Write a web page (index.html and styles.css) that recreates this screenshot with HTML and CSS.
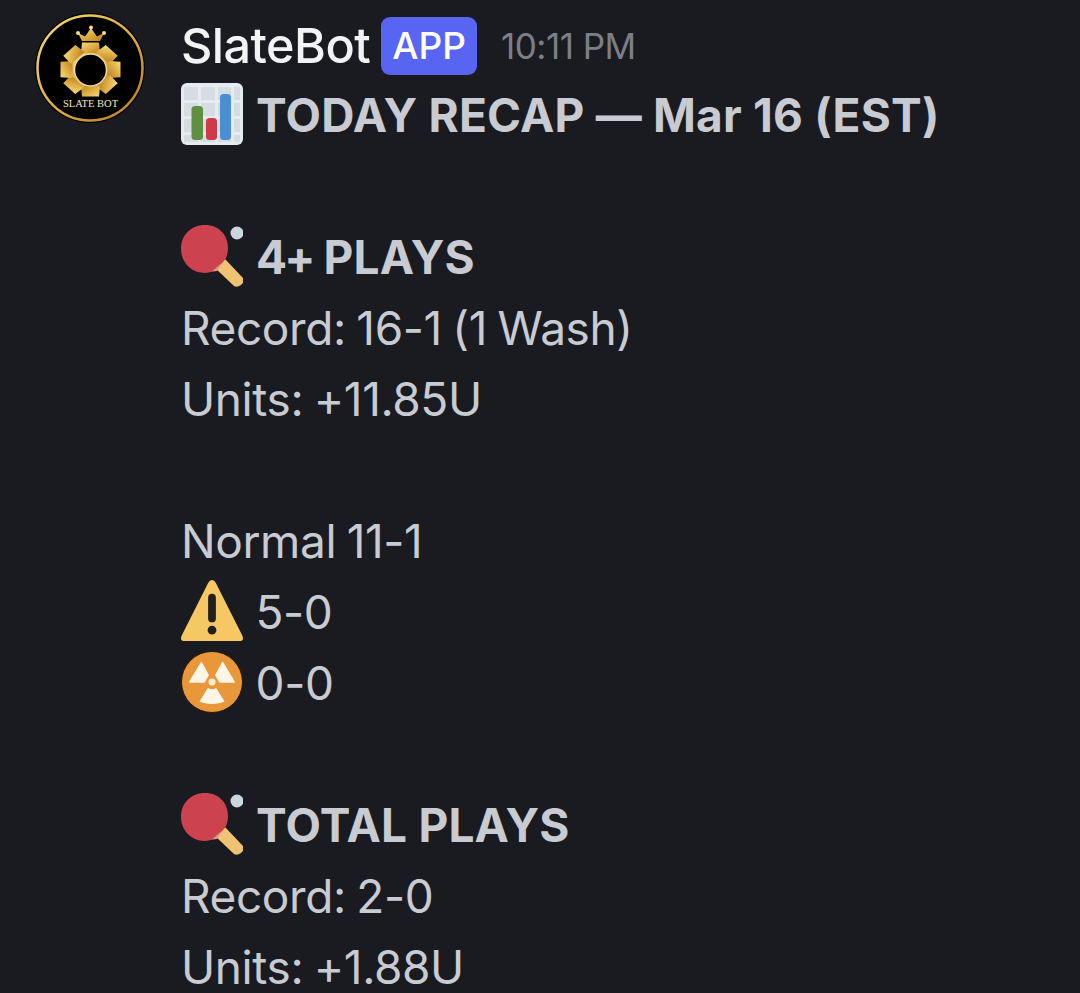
FILE: index.html
```html
<!DOCTYPE html>
<html lang="en">
<head>
<meta charset="utf-8">
<title>SlateBot</title>
<link rel="stylesheet" href="styles.css">
</head>
<body>
<svg class="defs" width="0" height="0" aria-hidden="true">
  <defs>
    <symbol id="paddle" viewBox="0 0 62 62">
      <path d="M43 33 L62 53 Q64 56 60 60 Q56 63 53 61 L33 42 Z" fill="#f0c274"/>
      <path d="M27 47 L36 46 L42 37 L39 33 L30 40 Z" fill="#d99e82"/>
      <path d="M24 0 C38 0 47 10 47 23 C47 29 45 35 41 38 L36 42 C33 45 30 48 24 48 C9 48 0 36 0 24 C0 10 10 0 24 0 Z" fill="#cd424f"/>
      <circle cx="56" cy="8" r="6.5" fill="#ccd6dd"/>
    </symbol>
    <symbol id="chart" viewBox="0 0 62 62">
      <rect width="62" height="62" rx="6" fill="#e6ebef"/>
      <path d="M3 4H17V17H3ZM20 4H34V17H20ZM37 4H50V17H37ZM53 4H59V17H53ZM3 20H17V33H3ZM20 20H34V33H20ZM37 20H50V33H37ZM53 20H59V33H53ZM3 36H17V49H3ZM20 36H34V49H20ZM37 36H50V49H37ZM53 36H59V49H53ZM3 52H17V59H3ZM20 52H34V59H20ZM37 52H50V59H37ZM53 52H59V59H53Z" fill="#d5dce2"/>
      <rect x="10.5" y="23" width="11.5" height="34" rx="3.5" fill="#5f8f43"/>
      <rect x="25" y="35" width="11" height="22" rx="3.5" fill="#cf3a49"/>
      <rect x="39" y="11" width="11" height="46" rx="3.5" fill="#4a8fd4"/>
    </symbol>
    <symbol id="warn" viewBox="0 0 64 63" preserveAspectRatio="none">
      <path d="M32 0 Q34.500 0 36 3 L63 56 Q66 62 60 62 H4 Q-2 62 1 56 L28 3 Q29.500 0 32 0 Z" fill="#f5c863"/>
      <rect x="28" y="14" width="8" height="29" rx="4" fill="#231f20"/>
      <circle cx="32" cy="51" r="4.500" fill="#231f20"/>
    </symbol>
    <symbol id="radio" viewBox="0 0 64 64">
      <circle cx="32" cy="32" r="31.500" fill="#e8973a" stroke="#2a1605" stroke-width="1"/>
      <circle cx="32" cy="32" r="3.700" fill="#fdebc8"/>
      <path class="blade" d="M21 12 L9 32 H24 L28 25 Z"/>
      <path class="blade" d="M43 12 L55 32 H40 L36 25 Z"/>
      <path class="blade" d="M20 52 Q32 56 44 52 L36 39 Q32 41 28 39 Z"/>
    </symbol>
    <linearGradient id="gold" x1="0" y1="0" x2="1" y2="1">
      <stop offset="0" stop-color="#f8dd7e"/>
      <stop offset="0.55" stop-color="#dca93f"/>
      <stop offset="1" stop-color="#b57e22"/>
    </linearGradient>
  </defs>
</svg>
<main class="message">
  <svg class="avatar" viewBox="0 0 110 110" role="img" aria-label="SlateBot">
    <circle cx="55" cy="55" r="55" fill="#000"/>
    <circle cx="55" cy="55" r="52.500" fill="none" stroke="url(#gold)" stroke-width="2.500"/>
    <path d="M47 28 L43 20 L50 23.500 L56 15 L62 23.500 L69 20 L65 28 Z" fill="url(#gold)"/>
    <circle cx="43" cy="20" r="2" fill="#f8dd7e"/>
    <circle cx="56" cy="14.500" r="2" fill="#f8dd7e"/>
    <circle cx="69" cy="20" r="2" fill="#f8dd7e"/>
    <g fill="url(#gold)" transform="translate(55.500 56.500) scale(1 0.9)">
      <circle r="24"/>
      <path id="tooth" d="M-8.500 -30 H8.500 L9.500 -18 H-9.500 Z"/>
      <use href="#tooth" transform="rotate(45)"/>
      <use href="#tooth" transform="rotate(90)"/>
      <use href="#tooth" transform="rotate(135)"/>
      <use href="#tooth" transform="rotate(180)"/>
      <use href="#tooth" transform="rotate(225)"/>
      <use href="#tooth" transform="rotate(270)"/>
      <use href="#tooth" transform="rotate(315)"/>
    </g>
    <circle cx="55.500" cy="57" r="16" fill="#000" stroke="#f0d9a0" stroke-width="1.500"/>
    <text class="avatar-label" x="55.500" y="93.500" text-anchor="middle">SLATE BOT</text>
  </svg>
  <div class="body">
    <header class="head">
      <span class="name">SlateBot</span>
      <span class="badge">APP</span>
      <time class="time">10:11 PM</time>
    </header>
    <p class="line strong"><svg class="emoji"><use href="#chart"/></svg> TODAY RECAP — Mar 16 (EST)</p>
    <p class="line blank">&nbsp;</p>
    <p class="line strong"><svg class="emoji"><use href="#paddle"/></svg> <span class="tight">4+</span> PLAYS</p>
    <p class="line">Record: 16-1 (1 Wash)</p>
    <p class="line">Units: +11.85U</p>
    <p class="line blank">&nbsp;</p>
    <p class="line">Normal 11-1</p>
    <p class="line"><svg class="emoji"><use href="#warn"/></svg> 5-0</p>
    <p class="line"><svg class="emoji"><use href="#radio"/></svg> 0-0</p>
    <p class="line blank">&nbsp;</p>
    <p class="line strong"><svg class="emoji"><use href="#paddle"/></svg> TOTAL PLAYS</p>
    <p class="line">Record: 2-0</p>
    <p class="line">Units: +1.88U</p>
  </div>
</main>
</body>
</html>
```
FILE: styles.css
```css
html, body {
  margin: 0;
  height: 100%;
  overflow: hidden;
  background: #1a1b20;
}
.defs { position: absolute; }
.blade {
  fill: #fff6e6;
  stroke: #fff6e6;
  stroke-width: 1.5;
  stroke-linejoin: round;
}
.message {
  display: flex;
  gap: 36px;
  padding: 13px 0 0 35px;
  font-family: "Inter", "Noto Sans", sans-serif;
  color: #c8cbd2;
}
.avatar { width: 110px; height: 110px; flex: none; }
.avatar-label {
  font-family: "Liberation Serif", serif;
  font-size: 10.500px;
  fill: #f5e8c8;
}
.body { flex: 1; min-width: 0; }
.head {
  display: flex;
  align-items: center;
  height: 69px;
  margin-top: -2px;
}
.name { font-size: 48.500px; font-weight: 500; color: #f2f3f5; letter-spacing: -0.5px; }
.badge {
  margin-left: 11px;
  background: #5865f2;
  color: #fff;
  font-size: 37px;
  font-weight: 500;
  padding: 7px 11px;
  border-radius: 9px;
  line-height: 44px;
}
.time { margin-left: 24px; font-size: 35px; color: #7d7f88; letter-spacing: -0.5px; }
.line {
  margin: 0;
  height: 71px;
  line-height: 71px;
  font-size: 46px;
  letter-spacing: -0.4px;
  word-spacing: -2px;
  white-space: nowrap;
}
.strong { letter-spacing: 0.2px; word-spacing: 0; font-weight: 700; }
.tight { letter-spacing: -3px; }
.emoji {
  width: 62px;
  height: 62px;
  margin-right: 2px;
  vertical-align: -13px;
}
```
